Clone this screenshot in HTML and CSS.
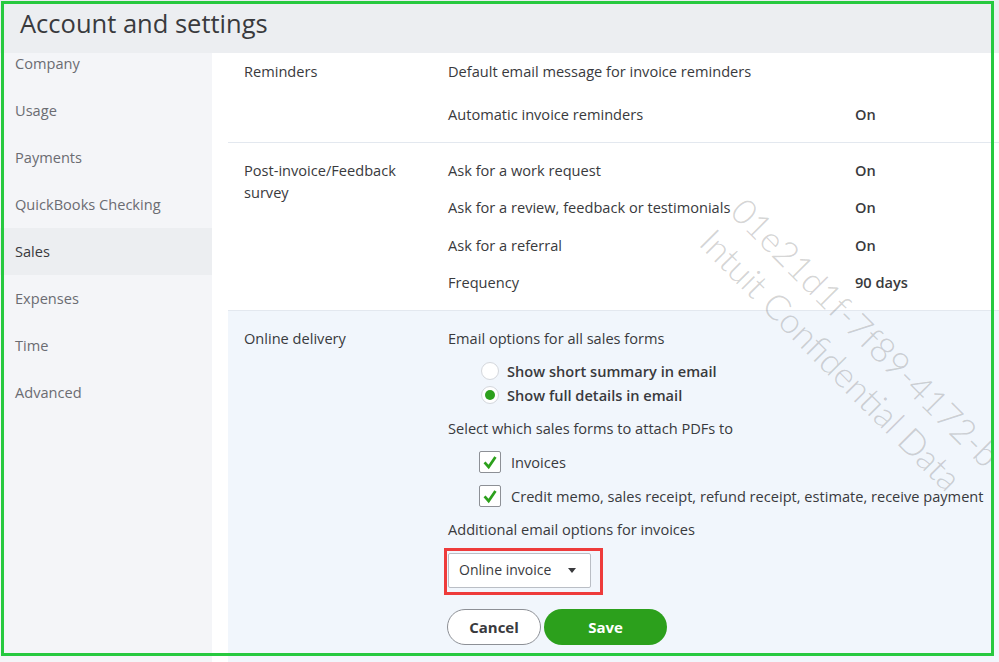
FILE: index.html
```html
<!DOCTYPE html>
<html lang="en">
<head>
    <meta charset="UTF-8">
    <meta name="viewport" content="width=device-width, initial-scale=1.0">
    <title>Account and settings</title>
    <link rel="stylesheet" href="styles.css">
</head>
<body>
    <div class="page">
        <header class="topbar">
            <h1>Account and settings</h1>
        </header>
        <div class="layout">
            <nav class="sidebar">
                <ul>
                    <li>Company</li>
                    <li>Usage</li>
                    <li>Payments</li>
                    <li>QuickBooks Checking</li>
                    <li class="active">Sales</li>
                    <li>Expenses</li>
                    <li>Time</li>
                    <li>Advanced</li>
                </ul>
            </nav>
            <main class="content">
                <section class="block block-reminders">
                    <div class="block-label">Reminders</div>
                    <div class="rows">
                        <div class="row"><span class="name">Default email message for invoice reminders</span></div>
                        <div class="row"><span class="name">Automatic invoice reminders</span><span class="value">On</span></div>
                    </div>
                </section>
                <section class="block block-survey">
                    <div class="block-label">Post-invoice/Feedback survey</div>
                    <div class="rows">
                        <div class="row"><span class="name">Ask for a work request</span><span class="value">On</span></div>
                        <div class="row"><span class="name">Ask for a review, feedback or testimonials</span><span class="value">On</span></div>
                        <div class="row"><span class="name">Ask for a referral</span><span class="value">On</span></div>
                        <div class="row"><span class="name">Frequency</span><span class="value">90 days</span></div>
                    </div>
                </section>
                <section class="block block-delivery">
                    <div class="block-label">Online delivery</div>
                    <div class="editor">
                        <div class="line">Email options for all sales forms</div>
                        <div class="radios">
                            <label class="radio"><span class="dot"></span>Show short summary in email</label>
                            <label class="radio checked"><span class="dot"></span>Show full details in email</label>
                        </div>
                        <div class="line gap-select">Select which sales forms to attach PDFs to</div>
                        <div class="checks">
                            <label class="check">
                                <span class="box">
                                    <svg viewBox="0 0 22 22"><path d="M5 11.5l4.5 5 7.5-11"/></svg>
                                </span>
                                Invoices
                            </label>
                            <label class="check">
                                <span class="box">
                                    <svg viewBox="0 0 22 22"><path d="M5 11.5l4.5 5 7.5-11"/></svg>
                                </span>
                                Credit memo, sales receipt, refund receipt, estimate, receive payment
                            </label>
                        </div>
                        <div class="line gap-additional">Additional email options for invoices</div>
                        <div class="highlight">
                            <div class="select">
                                <span>Online invoice</span>
                                <span class="caret"></span>
                            </div>
                        </div>
                        <div class="actions">
                            <button class="btn btn-cancel">Cancel</button>
                            <button class="btn btn-save">Save</button>
                        </div>
                    </div>
                </section>
            </main>
        </div>
        <div class="watermark">01e21d1f-7f89-4172-b<br>Intuit Confidential Data</div>
        <div class="frame"></div>
    </div>
</body>
</html>
```

FILE: styles.css
```css
* {
    box-sizing: border-box;
}
body {
    margin: 0;
    font-family: "Open Sans", "Noto Sans", sans-serif;
    font-size: 14.6px;
    color: #393a3d;
    background: #f4f5f8;
}
.page {
    position: relative;
    width: 999px;
    height: 662px;
    overflow: hidden;
}
.topbar {
    position: relative;
    z-index: 1;
    height: 53px;
    background: #eceef1;
}
.topbar h1 {
    margin: 0;
    padding-left: 20px;
    font-size: 25.5px;
    font-weight: 400;
    line-height: 47px;
    color: #393a3d;
}
.layout {
    display: flex;
    height: 609px;
}
.sidebar {
    width: 212px;
    flex-shrink: 0;
    background: #f4f5f8;
}
.sidebar ul {
    list-style: none;
    margin: -13px 0 0;
    padding: 0;
}
.sidebar li {
    height: 47px;
    line-height: 47px;
    padding-left: 15px;
    color: #6b6c72;
}
.sidebar li.active {
    background: #eceef1;
    color: #393a3d;
}
.content {
    flex: 1;
    background: #fff;
    padding-left: 16px;
}
.block {
    display: flex;
    padding-left: 16px;
    border-bottom: 1px solid #e3e8ef;
    line-height: 22px;
}
.block-label {
    width: 204px;
    padding-right: 40px;
    flex-shrink: 0;
}
.rows {
    display: flex;
    flex-direction: column;
}
.row {
    display: flex;
}
.row .name {
    width: 407px;
}
.row .value {
    font-weight: 600;
}
.block-reminders {
    padding-top: 7px;
    padding-bottom: 17px;
}
.block-reminders .rows {
    gap: 21px;
}
.block-survey {
    padding-top: 16px;
    padding-bottom: 17px;
}
.block-survey .rows {
    gap: 15.3px;
}
.block-delivery {
    padding-top: 16px;
    height: 400px;
    background: #f1f6fc;
    border-bottom: 0;
}
.editor {
    display: flex;
    flex-direction: column;
    align-items: flex-start;
}
.radios {
    margin-top: 10px;
    padding-left: 33px;
}
.radio {
    display: flex;
    align-items: center;
    height: 24px;
    font-weight: 600;
}
.radio .dot {
    width: 18px;
    height: 18px;
    margin-right: 8px;
    border: 1px solid #d4d7dc;
    border-radius: 50%;
    background: #fff;
    display: flex;
    align-items: center;
    justify-content: center;
}
.radio.checked .dot::after {
    content: "";
    width: 10px;
    height: 10px;
    border-radius: 50%;
    background: #2ca01c;
}
.gap-select {
    margin-top: 10px;
}
.checks {
    display: flex;
    flex-direction: column;
    gap: 12px;
    margin-top: 12px;
    padding-left: 31px;
}
.check {
    display: flex;
    align-items: center;
    height: 22px;
}
.check .box {
    width: 22px;
    height: 22px;
    margin-right: 10px;
    border: 1px solid #8d9096;
    border-radius: 2px;
    background: #fff;
}
.check svg {
    display: block;
    width: 20px;
    height: 20px;
    fill: none;
    stroke: #2ca01c;
    stroke-width: 3;
}
.gap-additional {
    margin-top: 11px;
}
.highlight {
    margin: 8px 0 0 -4px;
    padding: 2px 9px 4px 1px;
    border: 3px solid #ee3b3b;
}
.select {
    display: flex;
    align-items: center;
    justify-content: space-between;
    width: 143px;
    height: 35px;
    padding: 0 14px 0 10px;
    background: #fff;
    border: 1px solid #babec5;
    border-radius: 2px;
    font-size: 14px;
}
.caret {
    width: 0;
    height: 0;
    border-left: 4px solid transparent;
    border-right: 4px solid transparent;
    border-top: 5px solid #393a3d;
}
.actions {
    display: flex;
    gap: 3px;
    margin-top: 14px;
    margin-left: -1px;
}
.btn {
    height: 36px;
    border-radius: 18px;
    font-family: inherit;
    font-size: 15px;
    font-weight: 700;
    cursor: pointer;
}
.btn-cancel {
    width: 94px;
    background: #fff;
    border: 1px solid #8d9096;
    color: #393a3d;
}
.btn-save {
    width: 123px;
    background: #2ca01c;
    border: 0;
    color: #fff;
}
.watermark {
    position: absolute;
    left: 754px;
    top: 188px;
    z-index: 2;
    transform: rotate(45deg);
    transform-origin: 0 0;
    white-space: nowrap;
    font-family: "Lato", "Open Sans", sans-serif;
    font-weight: 300;
    font-size: 35px;
    line-height: 44px;
    color: rgba(110, 110, 110, 0.3);
    pointer-events: none;
}
.frame {
    position: absolute;
    left: 1px;
    top: 1px;
    width: 993px;
    height: 655px;
    z-index: 3;
    border: 3px solid #27c93f;
    pointer-events: none;
}
```
